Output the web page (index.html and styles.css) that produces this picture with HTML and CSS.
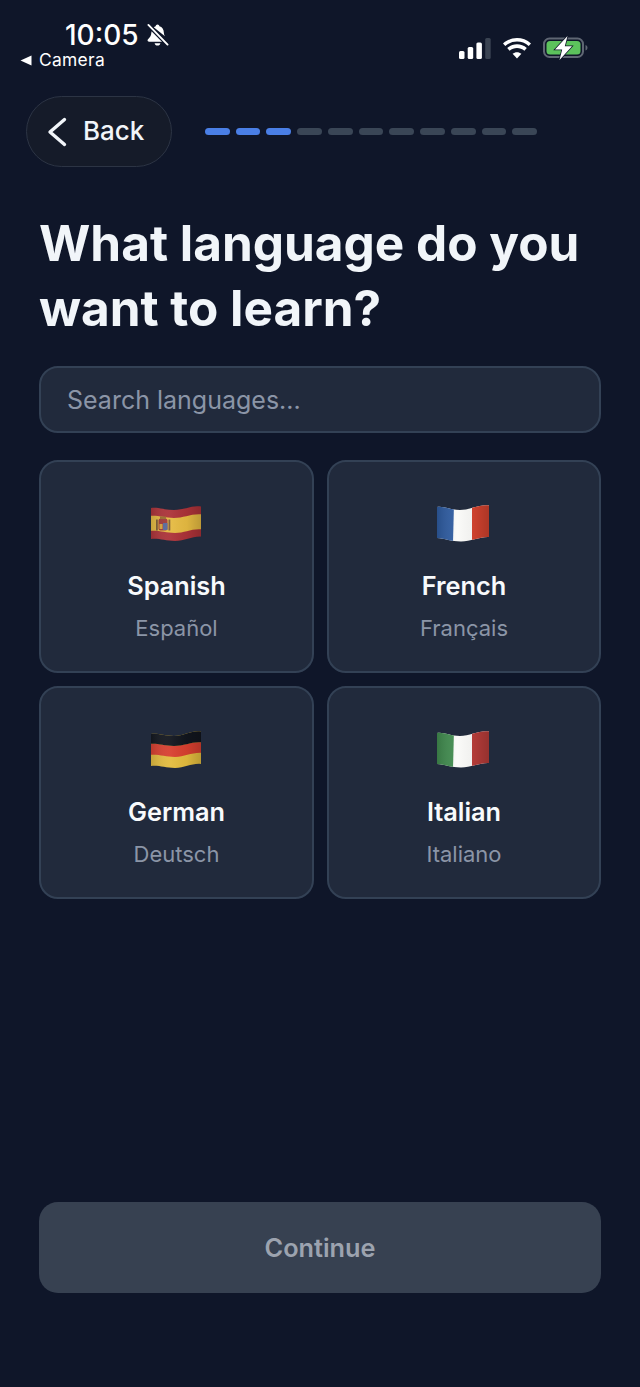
FILE: index.html
```html
<!DOCTYPE html>
<html lang="en">
<head>
<meta charset="utf-8">
<title>What language do you want to learn?</title>
<link rel="stylesheet" href="styles.css">
</head>
<body>
<div class="screen">
  <div class="status">
    <div class="status-left">
      <div class="time-row">
        <span class="time">10:05</span>
        <svg class="bell" viewBox="0 0 24 24" width="23" height="24">
          <path d="M6.200 7.400 17.600 19H3.200c-1 0-1.600-.6-1.600-1.400 0-.7.500-1.100 1-1.600 1.700-1.600 2.800-3 3-6.500zM8 3.900c.6-.5 1.300-.9 2.100-1.100C10.300 1.800 11 1 12 1s1.800.8 2 1.800c3 .8 4.500 3.300 4.600 6.500.1 1.700.5 3 1.200 4.100z" fill="#fff"/>
          <path d="M9 20.500h6c-.2 1.500-1.400 2.500-3 2.500s-2.800-1-3-2.500z" fill="#fff"/>
          <path d="M2.500 1.500 22.500 22" stroke="#0f1629" stroke-width="4.500"/>
          <path d="M2.500 1.500 22.500 22" stroke="#fff" stroke-width="2" stroke-linecap="round"/>
        </svg>
      </div>
      <div class="app-row">
        <svg class="back-tri" viewBox="0 0 12 11" width="12" height="11"><path d="M11.500.5v10L.5 5.500z" fill="#fff"/></svg>
        <span class="app-name">Camera</span>
      </div>
    </div>
    <div class="status-right">
      <svg class="signal" viewBox="0 0 32 21" width="32" height="21">
        <rect x="0" y="13" width="5.500" height="8" rx="1.500" fill="#fff"/>
        <rect x="8.700" y="9" width="5.500" height="12" rx="1.500" fill="#fff"/>
        <rect x="17.400" y="4.500" width="5.500" height="16.500" rx="1.500" fill="#fff"/>
        <rect x="26.200" y="0" width="5.500" height="21" rx="1.500" fill="#3a4352"/>
      </svg>
      <svg class="wifi" viewBox="0 0 28 21" width="28" height="21">
        <path d="M14 20.500 9.600 15.800c2.500-2.200 6.300-2.200 8.800 0z" fill="#fff"/>
        <path d="M6.600 12.700 4.200 10.100c5.500-5 14.100-5 19.600 0l-2.400 2.600c-4.200-3.700-10.600-3.700-14.800 0z" fill="#fff"/>
        <path d="M2.300 8 0 5.500C7.900-1.700 20.100-1.700 28 5.500L25.700 8C19.100 2.100 8.900 2.100 2.300 8z" fill="#fff"/>
      </svg>
      <svg class="battery" viewBox="0 0 46 24" width="46" height="24">
        <rect x="1" y="2.500" width="39" height="18.500" rx="5.500" fill="none" stroke="#5f6673" stroke-width="2"/>
        <rect x="3.500" y="5" width="34" height="13.500" rx="3.500" fill="#5cc25c"/>
        <path d="M42.500 9v5.500c1.300-.4 2-1.500 2-2.700s-.7-2.400-2-2.800z" fill="#5f6673"/>
        <path d="M24.500 0 12 13.500h7.200L16.500 24 29 10.200h-7.200z" fill="#fff" stroke="#0f1629" stroke-width="1.500" paint-order="stroke"/>
      </svg>
    </div>
  </div>

  <div class="topbar">
    <button class="back-btn">
      <svg class="chevron" viewBox="0 0 20 30" width="20" height="30"><path d="M17.500 2.500 3 15l14.500 12.500" fill="none" stroke="#f1f5f9" stroke-width="3.400" stroke-linecap="round" stroke-linejoin="round"/></svg>
      <span class="back-label">Back</span>
    </button>
    <div class="progress">
      <i class="seg on"></i><i class="seg on"></i><i class="seg on"></i><i class="seg"></i><i class="seg"></i><i class="seg"></i><i class="seg"></i><i class="seg"></i><i class="seg"></i><i class="seg"></i><i class="seg"></i>
    </div>
  </div>

  <main class="content">
    <h1 class="title">What language do you want to learn?</h1>
    <div class="search">Search languages...</div>
    <div class="grid">
      <button class="card">
        <svg class="flag" viewBox="0 0 54 40" width="54" height="40">
          <defs>
            <linearGradient id="shade" x1="0" x2="1" y1="0" y2="0">
              <stop offset="0" stop-color="#000" stop-opacity=".16"/>
              <stop offset=".4" stop-color="#fff" stop-opacity=".05"/>
              <stop offset=".7" stop-color="#000" stop-opacity=".04"/>
              <stop offset="1" stop-color="#000" stop-opacity=".2"/>
            </linearGradient>
          </defs>
          <clipPath id="clip-es"><path d="M2 5C9 4 15 7 25 7S43 2 52 3.500V33.500C43 33 36 38 26 38S10 35 2 36z"/></clipPath>
          <g clip-path="url(#clip-es)">
            <rect width="54" height="40" fill="#ac3238"/>
            <path d="M0 13C9 12 15 15 25 15S43 10 54 11.500V26.500C43 25 36 30 26 30S10 27 0 28z" fill="#e6bb42"/>
            <rect x="9.500" y="15.500" width="9" height="12" rx="2" fill="#a23a38"/>
            <rect x="14" y="20" width="4.500" height="7" fill="#56689b"/>
            <rect x="10.500" y="21" width="3" height="5" fill="#d9a53a"/>
            <rect x="7" y="16.500" width="1.800" height="11" fill="#7d5a34"/>
            <rect x="19.500" y="16.500" width="1.800" height="11" fill="#7d5a34"/>
            <rect x="11" y="13.500" width="6" height="2.500" fill="#9b6d2c"/>
            <rect width="54" height="40" fill="url(#shade)"/>
          </g>
        </svg>
        <span class="name">Spanish</span>
        <span class="native">Español</span>
      </button>
      <button class="card">
        <svg class="flag" viewBox="0 0 54 40" width="54" height="40">
          <clipPath id="clip-fr"><path d="M1 4C8 3 14 7 24 7S44 1 53 2.500V34C44 33.500 35 38.500 25 38.500S9 35.500 1 35z"/></clipPath>
          <g clip-path="url(#clip-fr)">
            <rect width="54" height="40" fill="#fafaf8"/>
            <path d="M0 0H18L17 40H0z" fill="#2c5aa0"/>
            <path d="M36 0H54V40H36z" fill="#d5432f"/>
            <rect width="54" height="40" fill="url(#shade)"/>
          </g>
        </svg>
        <span class="name">French</span>
        <span class="native">Français</span>
      </button>
      <button class="card">
        <svg class="flag" viewBox="0 0 54 40" width="54" height="40">
          <clipPath id="clip-de"><path d="M2 5C9 4 15 7 25 7S43 1 52 2.500V35C43 34 36 39 26 39S10 36 2 37z"/></clipPath>
          <g clip-path="url(#clip-de)">
            <rect width="54" height="40" fill="#e3bc3e"/>
            <path d="M0 15C9 14 15 17 25 17S43 12 54 13.500V24C43 23 36 28 26 28S10 25 0 26z" fill="#d83f2f"/>
            <path d="M0 0H54V13.500C43 12 36 17 25 17S9 14 0 15z" fill="#11151d"/>
            <rect width="54" height="40" fill="url(#shade)"/>
          </g>
        </svg>
        <span class="name">German</span>
        <span class="native">Deutsch</span>
      </button>
      <button class="card">
        <svg class="flag" viewBox="0 0 54 40" width="54" height="40">
          <clipPath id="clip-it"><path d="M1 4C8 3 14 7 24 7S44 1 53 2.500V34C44 33.500 35 38.500 25 38.500S9 35.500 1 35z"/></clipPath>
          <g clip-path="url(#clip-it)">
            <rect width="54" height="40" fill="#fafaf8"/>
            <path d="M0 0H18L17 40H0z" fill="#3f8a4d"/>
            <path d="M36 0H54V40H36z" fill="#b93d3a"/>
            <rect width="54" height="40" fill="url(#shade)"/>
          </g>
        </svg>
        <span class="name">Italian</span>
        <span class="native">Italiano</span>
      </button>
    </div>
    <button class="continue">Continue</button>
  </main>
</div>
</body>
</html>
```

FILE: styles.css
```css
* { box-sizing: border-box; }
html, body { margin: 0; padding: 0; }
body { background: #0f1629; font-family: Inter, "Liberation Sans", sans-serif; color: #f1f5f9; }
button { font-family: inherit; }

.screen { width: 640px; height: 1387px; display: flex; flex-direction: column; overflow: hidden; }

.status { height: 96px; padding: 20px 51px 0 20px; display: flex; justify-content: space-between; align-items: flex-start; }
.status-left { display: flex; flex-direction: column; }
.time-row { display: flex; align-items: center; gap: 7px; padding-left: 45px; height: 30px; }
.time { font-size: 28px; font-weight: 500; line-height: 30px; color: #fff; }
.app-row { display: flex; align-items: center; gap: 7px; height: 20px; }
.app-name { font-size: 17.4px; font-weight: 400; line-height: 20px; color: #fff; letter-spacing: .3px; }
.status-right { display: flex; align-items: center; gap: 12px; padding-top: 16px; }

.topbar { display: flex; align-items: center; padding-left: 26px; gap: 33px; }
.back-btn { width: 146px; height: 71px; border-radius: 36px; background: #151b29; border: 1px solid #2c3444; color: #f1f5f9; display: flex; align-items: center; gap: 16px; padding: 0 0 0 20px; font-size: 26px; font-weight: 500; }
.back-label { line-height: 30px; padding-bottom: 2px; }
.progress { width: 332px; display: flex; gap: 6px; }
.seg { flex: 1; height: 7px; border-radius: 4px; background: #3a4656; }
.seg.on { background: #4a7fe6; }

.content { flex: 1; display: flex; flex-direction: column; padding: 44px 39px 94px; }
.title { margin: 0; font-size: 49.5px; line-height: 65px; font-weight: 700; color: #f1f5f9; }
.search { margin-top: 25px; height: 67px; border: 2px solid #334155; border-radius: 19px; background: #212a3c; color: #8b95a7; font-size: 25px; line-height: 64px; padding-left: 26px; }
.grid { margin-top: 27px; display: grid; grid-template-columns: 275px 274px; gap: 13px; }
.card { height: 213px; border: 2.500px solid #334155; border-radius: 19px; background: #212a3c; display: flex; flex-direction: column; align-items: center; padding: 41px 0 0; }
.flag { display: block; margin-left: -2px; }
.name { margin-top: 27px; font-size: 25.3px; line-height: 32px; font-weight: 600; color: #f8fafc; }
.native { margin-top: 10px; font-size: 22px; line-height: 32px; color: #8b95a7; }
.continue { margin-top: auto; height: 91px; border: 0; border-radius: 19px; background: #374151; color: #9ca3af; font-size: 25.3px; font-weight: 600; }
```
